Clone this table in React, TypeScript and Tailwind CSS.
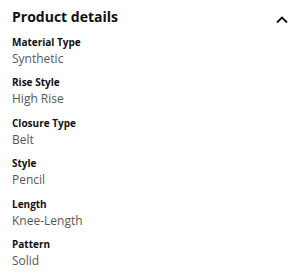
import React from 'react';

const details = [
    { label: 'Material Type', value: 'Synthetic' },
    { label: 'Rise Style', value: 'High Rise' },
    { label: 'Closure Type', value: 'Belt' },
    { label: 'Style', value: 'Pencil' },
    { label: 'Length', value: 'Knee-Length' },
    { label: 'Pattern', value: 'Solid' },
];

const App = () => {
    return (
        <div className="w-[300px] h-[275px] bg-white pl-3 pr-3 pt-[6px]" style={{ fontFamily: '"Open Sans", "Noto Sans", sans-serif' }}>
            {/* Header */}
            <div className="flex items-start justify-between h-[22px]">
                <h2 className="text-[14px] leading-[22px] font-bold text-[#0f1111]">Product details</h2>
                <svg width="12" height="8" viewBox="0 0 12 8" className="mt-[10px]" fill="none">
                    <path d="M1 6.5 L6 1.5 L11 6.5" stroke="#0f1111" strokeWidth="1.8" />
                </svg>
            </div>

            {/* Detail rows */}
            <div className="mt-[7px] flex flex-col">
                {details.map(d => (
                    <div key={d.label} className="h-[40.4px]">
                        <div className="text-[10px] leading-[15px] font-bold text-[#0f1111]">{d.label}</div>
                        <div className="text-[12px] leading-[17px] text-[#565959]">{d.value}</div>
                    </div>
                ))}
            </div>
        </div>
    );
};

export default App;
